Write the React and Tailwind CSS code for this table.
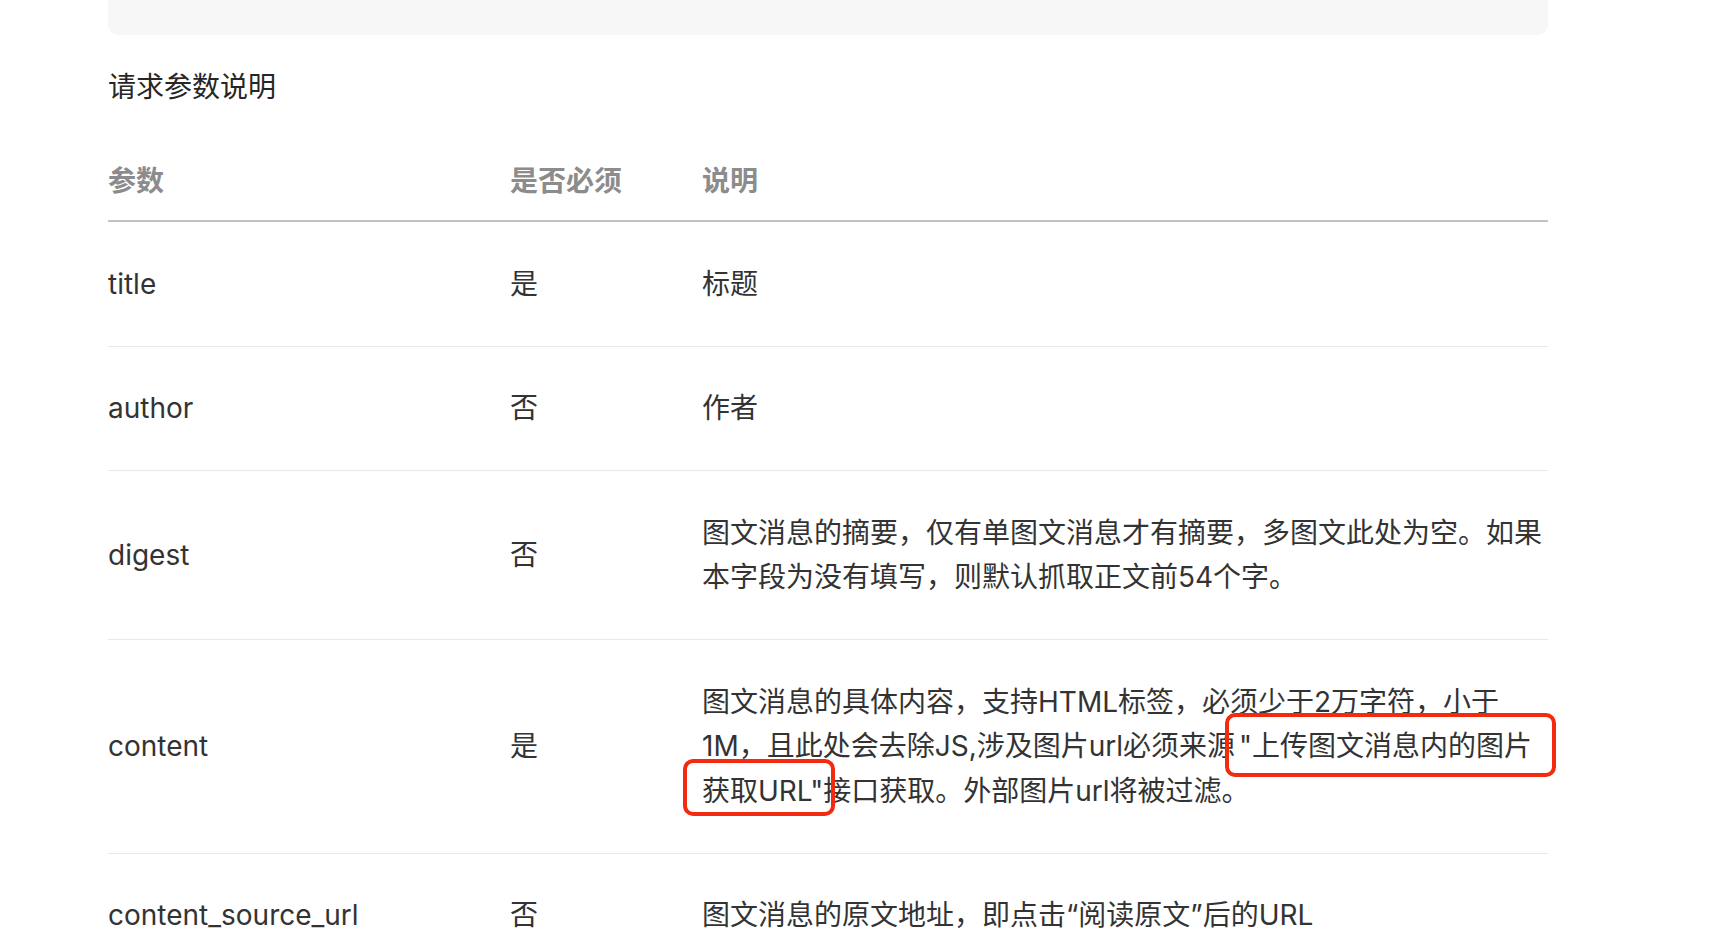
import React from "react";

const rows = [
  { name: "title", required: "是", desc: "标题" },
  { name: "author", required: "否", desc: "作者" },
  {
    name: "digest",
    required: "否",
    desc: "图文消息的摘要，仅有单图文消息才有摘要，多图文此处为空。如果本字段为没有填写，则默认抓取正文前54个字。",
  },
  { name: "content", required: "是", desc: "content" },
  {
    name: "content_source_url",
    required: "否",
    desc: "图文消息的原文地址，即点击“阅读原文”后的URL",
  },
];

// red annotation frame drawn over the text
function Marked({ children, frame, className = "" }) {
  return (
    <span className={`relative inline-block ${className}`}>
      {children}
      <span
        className={`pointer-events-none absolute border-[4px] border-[#f22b10] rounded-[10px] ${frame}`}
      />
    </span>
  );
}

function ContentDesc() {
  return (
    <>
      图文消息的具体内容，支持HTML标签，必须少于2万字符，小于1M，且此处会去除JS,涉及图片url必须来源
      <Marked className="pl-[4px]" frame="-top-[11px] -bottom-[8px] -left-[10px] -right-[24px]">
        "上传图文消息内的图片
      </Marked>
      <Marked frame="-top-[10px] -bottom-[3px] -left-[19px] -right-[12px]">
        获取URL"
      </Marked>
      接口获取。外部图片url将被过滤。
    </>
  );
}

export default function App() {
  return (
    <div className="min-h-screen bg-white font-[Inter,'Noto_Sans_CJK_SC',sans-serif] text-[28px] leading-[44.5px] text-[#333333]">
      <div className="ml-[108px] w-[1440px]">

        {/* ================= CODE BLOCK (scrolled off) ================= */}

        <div className="h-[35px] bg-[#f7f7f7] rounded-b-[10px]" />

        <h2 className="mt-[30px] text-[#262626] font-normal">
          请求参数说明
        </h2>

        {/* ================= PARAM TABLE ================= */}

        <table className="mt-[49px] w-full table-fixed border-collapse">
          <colgroup>
            <col className="w-[402px]" />
            <col className="w-[192px]" />
            <col className="w-[846px]" />
          </colgroup>

          <thead>
            <tr className="border-b-2 border-[#c2c2c2] text-left text-[#8c8c8c]">
              <th className="p-0 pb-[17px] font-semibold">参数</th>
              <th className="p-0 pb-[17px] font-semibold">是否必须</th>
              <th className="p-0 pb-[17px] font-semibold">说明</th>
            </tr>
          </thead>

          <tbody>
            {rows.map((row, i) => (
              <tr
                key={row.name}
                className={i < rows.length - 1 ? "border-b border-[#e8e8e8]" : ""}
              >
                <td className="py-[39.5px] align-middle">{row.name}</td>
                <td className="py-[39.5px] align-middle">{row.required}</td>
                <td className="py-[39.5px] align-middle">
                  {row.name === "content" ? <ContentDesc /> : row.desc}
                </td>
              </tr>
            ))}
          </tbody>
        </table>

      </div>
    </div>
  );
}
